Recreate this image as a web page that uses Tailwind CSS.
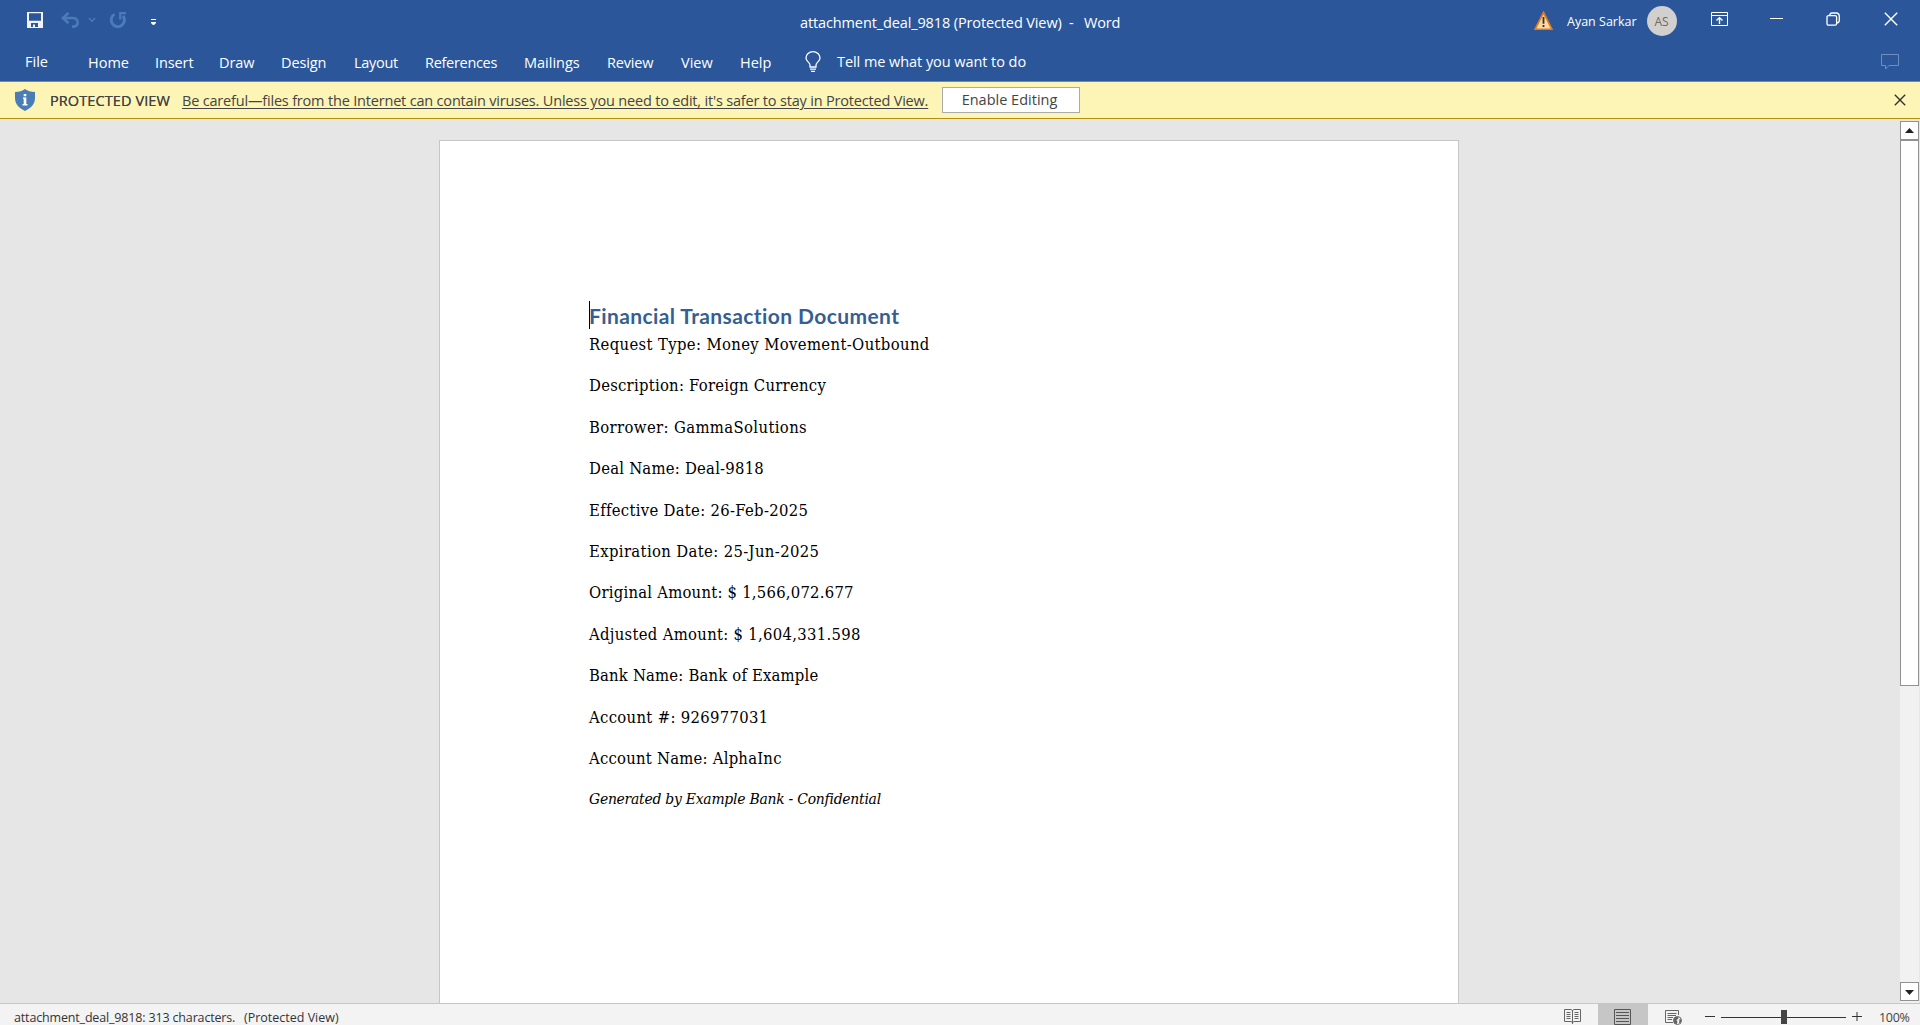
<!DOCTYPE html>
<html lang="en">
<head>
<meta charset="utf-8">
<title>attachment_deal_9818 (Protected View) - Word</title>
<script src="https://cdn.jsdelivr.net/npm/@tailwindcss/browser@4"></script>
</head>
<body class="flex h-[1025px] w-[1920px] flex-col overflow-hidden bg-[#e6e6e6] font-['Open_Sans',sans-serif] text-[14.5px]">

<header class="flex h-[82px] shrink-0 flex-col border-b border-[#a98a17] bg-[#2b579a] text-white">
  <!-- Title bar -->
  <div class="flex h-[42px] items-start whitespace-pre">
    <div class="flex w-[800px] pl-[27px] pt-[12px]">
      <svg class="h-4 w-4" viewBox="0 0 16 16"><path fill="#f3f3f3" fill-rule="evenodd" d="M0 0H16V16H0ZM2 1.300V8.700H14V1.300ZM4 11V15H6V12.500H8V15H11V11Z"/></svg>
      <svg class="ml-[18px] h-4 w-[18px]" viewBox="0 0 18 16" fill="none" stroke="#4d7bb8" stroke-width="2.600"><path d="M2 6H11.500C15 6 16.600 8 16.600 10.500S15 14.700 11 14.700"/><path d="M7.500 .8L2 6L7.500 11.200"/></svg>
      <svg class="ml-[9px] mt-[5px] h-[6px] w-[8px]" viewBox="0 0 8 6" fill="none" stroke="#4d7bb8" stroke-width="1.300"><path d="M.8 1L4 4.300L7.200 1"/></svg>
      <svg class="ml-[13px] h-[17px] w-[18px]" viewBox="0 0 18 17" fill="none" stroke="#4d7bb8" stroke-width="3"><path d="M5.500 2.300A6.600 6.600 0 1 0 14 4"/><path stroke-width="2.200" d="M17 1.200H11.200V7.500"/></svg>
      <svg class="ml-[24px] mt-[7px] h-[7px] w-[6px]" viewBox="0 0 6 7"><path fill="#fff" d="M0 0H5V1H0ZM0 3H5V4L3 6H2L0 4Z"/></svg>
    </div>
    <div class="w-[284px] pt-[13px] leading-5 tracking-[-0.12px]">attachment_deal_9818 (Protected View)  - </div>
    <div class="w-[450px] pt-[13px] leading-5 tracking-[-0.2px]">Word</div>
    <svg class="mt-[11px] h-[19px] w-[19px]" viewBox="0 0 19 19"><path d="M9.500 1.500L18 18.300H1Z" fill="#fbd9a0" stroke="#e07b1a" stroke-width="1.700"/><path d="M9.500 6V12.800M9.500 14V16" stroke="#333" stroke-width="1.800"/></svg>
    <div class="w-[94px] pl-[14px] pt-[12px] text-[12.5px] leading-5">Ayan Sarkar</div>
    <div class="mt-[6px] flex h-[30px] w-[30px] items-center justify-center rounded-full bg-[#d2d0ce] pt-px pr-px text-[12px] text-[#6b6966]">AS</div>
    <svg class="ml-[34px] mt-[12px] h-[14px] w-[17px]" viewBox="0 0 17 14" fill="none" stroke="#fff"><path d="M.5 .5H16.500V13.500H.5ZM.5 3.500H16.500"/><path stroke-width="1.400" d="M8.500 12V6M5.500 8.500L8.500 5.600L11.500 8.500"/></svg>
    <svg class="ml-[42px] mt-[17px] h-[3px] w-[13px]" viewBox="0 0 13 3"><path fill="#fff" d="M0 1H13V2H0Z"/></svg>
    <svg class="ml-[43px] mt-[12px] h-[15px] w-[15px]" viewBox="0 0 15 15" fill="none" stroke="#fff" stroke-width="1.300"><rect x="1" y="3.600" width="9.600" height="9.600" rx="1.500"/><path d="M3.600 3.400V3C4 1.500 5 1 6 1H10C12 1 13.300 2.200 13.300 4.200V8.500C13.300 10 12.500 10.700 11 11"/></svg>
    <svg class="ml-[43px] mt-[12px] h-[14px] w-[14px]" viewBox="0 0 14 14" stroke="#fff" stroke-width="1.400"><path d="M.8 .8L13.200 13.200M13.200 .8L.8 13.200"/></svg>
  </div>
  <!-- Ribbon tabs -->
  <nav class="flex whitespace-nowrap pt-[11px] leading-5">
    <div class="-mt-px w-[88px] pl-[25px]">File</div>
    <div class="w-[67px]">Home</div>
    <div class="w-[64px] tracking-[-0.1px]">Insert</div>
    <div class="w-[62px] tracking-[-0.1px]">Draw</div>
    <div class="w-[73px] tracking-[-0.1px]">Design</div>
    <div class="w-[71px] tracking-[-0.3px]">Layout</div>
    <div class="w-[99px] tracking-[-0.3px]">References</div>
    <div class="w-[83px]">Mailings</div>
    <div class="w-[74px] tracking-[-0.2px]">Review</div>
    <div class="w-[59px]">View</div>
    <div class="w-[65px]">Help</div>
    <svg class="-mt-[2px] h-[22px] w-4" viewBox="0 0 16 22" fill="none" stroke="#fff" stroke-width="1.300"><path d="M5 16V14C5 11.500 1 10.500 1 7A7 6.300 0 0 1 15 7C15 10.500 11 11.500 11 14V16ZM5 18.200H11M6 20.300H10"/></svg>
    <div class="-mt-px w-[1060px] pl-[16px] tracking-[-0.06px]">Tell me what you want to do</div>
    <svg class="h-[17px] w-[18px]" viewBox="0 0 18 17" fill="none" stroke="#6e8fc0"><path d="M.5 1.500H17.500V12.500H8L4.500 16V12.500H.5Z"/></svg>
  </nav>
</header>

<!-- Protected view message bar -->
<section class="flex h-[37px] shrink-0 items-start whitespace-nowrap border-b border-[#b58f09] bg-[#fcf5b6] leading-5 text-[#444]">
  <svg class="ml-[15px] mt-[7px] h-[22px] w-5" viewBox="0 0 20 22"><path fill="#4a7db8" d="M10 0C12.500 2 16 3 20 3V9C20 15 16 19 10 22C4 19 0 15 0 9V3C4 3 7.500 2 10 0Z"/><path fill="#fff" d="M8.700 5H11.300V7.200H8.700ZM8 8.500H11.300V15H12.500V16.500H7.500V15H8.700V10H8Z"/></svg>
  <div class="w-[147px] pl-[15px] pt-[9px] tracking-[0.1px] [text-shadow:0_0_0.5px_#444]">PROTECTED VIEW</div>
  <div class="w-[760px] pt-[9px] tracking-[-0.185px] underline decoration-1 underline-offset-2">Be careful—files from the Internet can contain viruses. Unless you need to edit, it's safer to stay in Protected View.</div>
  <button class="mt-[5px] h-[26px] w-[138px] border border-[#ababab] bg-white pr-[3px] leading-[24px]">Enable Editing</button>
  <svg class="ml-[814px] mt-[12px] h-3 w-3" viewBox="0 0 12 12" stroke="#333" stroke-width="1.400"><path d="M.8 .8L11.200 11.200M11.200 .8L.8 11.200"/></svg>
</section>

<!-- Document area -->
<main class="flex h-[884px] shrink-0 overflow-hidden">
  <div class="ml-[439px] mt-[21px] w-[1020px] border border-b-0 border-[#c6c6c6] bg-white">
    <article class="whitespace-nowrap pl-[149px] pt-[160px]">
      <div class="flex h-[30px] items-start">
        <span class="h-[28px] w-px bg-black"></span>
        <h1 class="-ml-px font-['Lato',sans-serif] text-[21px] font-bold leading-[29px] tracking-[0.4px] text-[#365f91]">Financial Transaction Document</h1>
      </div>
      <div class="pt-[4px] font-['DejaVu_Serif',serif] text-[16.5px] leading-[20px] text-black font-stretch-condensed">
        <p class="h-[41.4px] tracking-[0.36px]">Request Type: Money Movement-Outbound</p>
        <p class="h-[41.4px] tracking-[0.25px]">Description: Foreign Currency</p>
        <p class="h-[41.4px] tracking-[0.37px]">Borrower: GammaSolutions</p>
        <p class="h-[41.4px] tracking-[0.23px]">Deal Name: Deal-9818</p>
        <p class="h-[41.4px] tracking-[0.3px]">Effective Date: 26-Feb-2025</p>
        <p class="h-[41.4px] tracking-[0.36px]">Expiration Date: 25-Jun-2025</p>
        <p class="h-[41.4px] tracking-[0.23px]">Original Amount: $ 1,566,072.677</p>
        <p class="h-[41.4px] tracking-[0.3px]">Adjusted Amount: $ 1,604,331.598</p>
        <p class="h-[41.4px] tracking-[0.18px]">Bank Name: Bank of Example</p>
        <p class="h-[41.4px] tracking-[0.32px]">Account #: 926977031</p>
        <p class="h-[41.4px] tracking-[0.23px]">Account Name: AlphaInc</p>
        <p class="-mt-px text-[15.5px] italic tracking-[-0.25px]">Generated by Example Bank - Confidential</p>
      </div>
    </article>
  </div>
  <div class="ml-[441px] mt-[2px] flex w-[19px] flex-col bg-[#f1f1f1]">
    <div class="flex h-[19px] items-center justify-center border border-[#919191] bg-white"><svg class="h-[5px] w-[9px]" viewBox="0 0 9 5"><path fill="#222" d="M0 5L4.500 0L9 5Z"/></svg></div>
    <div class="h-[546px] border border-[#919191] bg-white"></div>
    <div class="h-[296px]"></div>
    <div class="flex h-[19px] items-center justify-center border border-[#919191] bg-white pt-px"><svg class="h-[5px] w-[9px]" viewBox="0 0 9 5"><path fill="#222" d="M0 0L4.500 5L9 0Z"/></svg></div>
  </div>
</main>

<!-- Status bar -->
<footer class="flex h-[22px] shrink-0 items-start overflow-hidden whitespace-pre border-t border-[#c6c6c6] bg-[#f3f3f3] text-[12.5px] leading-5 text-[#333]">
  <div class="w-[230px] pl-[14px] pt-[4px] tracking-[-0.16px]">attachment_deal_9818: 313 characters.</div>
  <div class="w-[1334px] pl-[14px] pt-[4px]">(Protected View)</div>
  <svg class="mt-[4px] h-4 w-[17px]" viewBox="0 0 17 16" fill="none" stroke="#666"><path d="M.5 1.500H7L8.500 2.500L10 1.500H16.500V13.500H10L8.500 14.500L7 13.500H.5ZM8.500 2V16M2.500 4.500H6.500M2.500 6.500H6.500M2.500 8.500H6.500M2.500 10.500H6.500M10.500 4.500H14.500M10.500 6.500H14.500M10.500 8.500H14.500M10.500 10.500H14.500"/></svg>
  <div class="ml-[17px] flex h-[21px] w-[50px] justify-center bg-[#c6c6c6] pr-px pt-[5px]"><svg class="h-4 w-[17px]" viewBox="0 0 17 16" fill="none" stroke="#555"><path d="M.5 .5H16.500V15.500H.5ZM2 3.500H15M2 6.500H15M2 9.500H15M2 12.500H15"/></svg></div>
  <svg class="ml-[17px] mt-[6px] h-[15px] w-[17px]" viewBox="0 0 17 15" fill="none" stroke="#666"><path d="M8 12.500H.5V.5H13.500V5M2.500 3.500H11.500M2.500 5.500H11M2.500 7.500H8M2.500 9.500H7"/><circle cx="12.500" cy="10.500" r="4" fill="#f3f3f3"/><path fill="#666" stroke="none" d="M8.500 9L10 7L13 6.500L13.500 8.500L11.500 10L12.500 12L11.500 14.500L9 13ZM14.500 9L16.500 9.500L16 12.500L14 13Z"/></svg>
  <svg class="ml-[23px] mt-[12px] h-px w-[10px]" viewBox="0 0 10 1"><path fill="#333" d="M0 0H10V1H0Z"/></svg>
  <svg class="ml-[6px] mt-[6px] h-[14px] w-[125px]" viewBox="0 0 125 14"><path fill="#333" d="M0 7H125V8H0Z"/><path fill="#444" d="M60 0H66V14H60Z"/></svg>
  <svg class="ml-[6px] mt-[8px] h-[10px] w-[10px]" viewBox="0 0 10 10"><path fill="#333" d="M0 4H10V5H0ZM4.500 0H5.500V9H4.500Z"/></svg>
  <div class="pl-[17px] pt-[4px] tracking-[-0.3px] text-[#444]">100%</div>
</footer>
</body>
</html>
